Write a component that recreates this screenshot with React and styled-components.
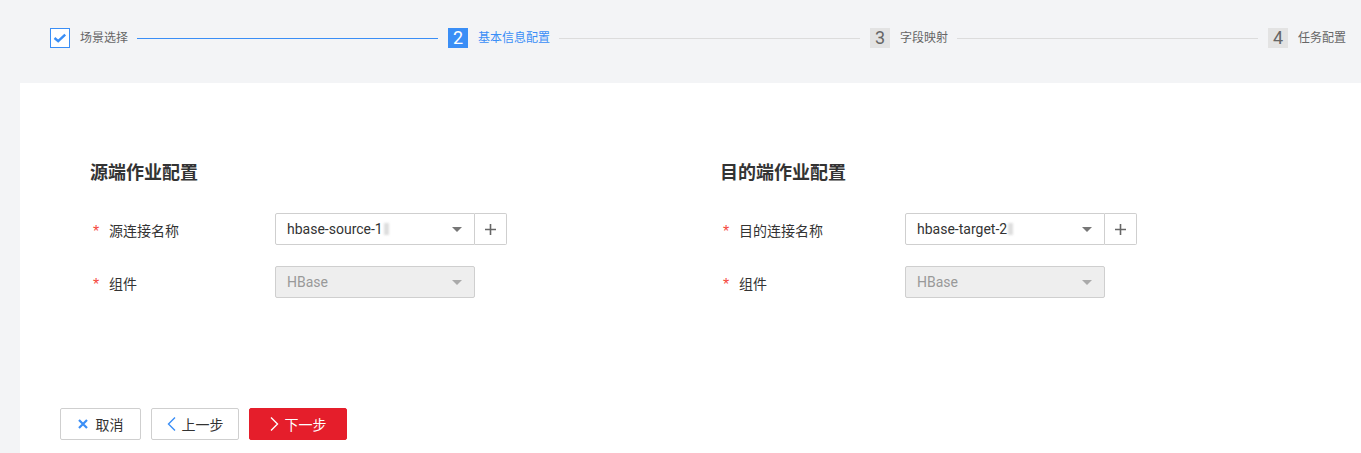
import React from "react";
import styled, { createGlobalStyle } from "styled-components";

const GlobalStyle = createGlobalStyle`
  html, body { margin: 0; padding: 0; }
  body {
    background: #f3f4f6;
    font-family: Roboto, "Noto Sans CJK SC", "Liberation Sans", sans-serif;
    color: #333;
    overflow: hidden;
  }
  * { box-sizing: border-box; }
`;

const Page = styled.div`
  display: flex;
  flex-direction: column;
  min-height: 100vh;
`;

const Header = styled.div`
  height: 83px;
  padding: 28px 15px 0 50px;
`;

const Steps = styled.div`
  display: flex;
  align-items: center;
  height: 20px;
`;

const StepBox = styled.div`
  width: 20px;
  height: 20px;
  flex: none;
  display: flex;
  align-items: center;
  justify-content: center;
  font-family: Roboto, "Liberation Sans", sans-serif;
  font-size: 18px;
  line-height: 20px;
  background: ${(p) => (p.$state === "active" ? "#3a8ef6" : p.$state === "done" ? "#fff" : "#e3e3e3")};
  color: ${(p) => (p.$state === "active" ? "#fff" : "#666")};
  border: ${(p) => (p.$state === "done" ? "1px solid #3a8ef6" : "none")};
`;

const StepLabel = styled.span`
  margin-left: 10px;
  font-size: 12px;
  line-height: 20px;
  white-space: nowrap;
  color: ${(p) => (p.$state === "active" ? "#3a8ef6" : "#666")};
`;

const StepLine = styled.div`
  flex: 1;
  height: 1px;
  margin: 0 10px 0 9px;
  background: ${(p) => (p.$done ? "#3a8ef6" : "#dcdcdc")};
`;

const Panel = styled.div`
  flex: 1;
  margin-left: 20px;
  background: #fff;
  padding: 78px 0 40px 40px;
`;

const Columns = styled.div`
  display: grid;
  grid-template-columns: 630px 1fr;
  margin-left: 30px;
`;

const Section = styled.div`
  display: flex;
  flex-direction: column;
`;

const SectionTitle = styled.h2`
  margin: 0 0 28px;
  font-size: 18px;
  line-height: 24px;
  font-weight: 700;
  color: #333;
`;

const Rows = styled.div`
  display: flex;
  flex-direction: column;
  gap: 21px;
`;

const Row = styled.div`
  display: flex;
  align-items: center;
  height: 32px;
`;

const Label = styled.div`
  width: 185px;
  flex: none;
  display: flex;
  align-items: center;
  font-size: 14px;
  color: #333;
  padding-left: 3px;
  padding-top: 2px;
`;

const Star = styled.span`
  color: #f5473b;
  font-size: 16px;
  font-family: "Liberation Sans", sans-serif;
  width: 16px;
  line-height: 14px;
  padding-top: 4px;
`;

const Control = styled.div`
  display: flex;
`;

const Select = styled.div`
  width: 200px;
  height: 32px;
  display: flex;
  align-items: center;
  justify-content: space-between;
  padding: 0 12px 0 11px;
  border: 1px solid #cfcfcf;
  border-radius: ${(p) => (p.$grouped ? "2px 0 0 2px" : "2px")};
  background: ${(p) => (p.$disabled ? "#eeeeee" : "#fff")};
  color: ${(p) => (p.$disabled ? "#999" : "#333")};
  font-size: 14px;
`;

const Value = styled.span`
  display: flex;
  align-items: center;
  white-space: nowrap;
`;

const Redacted = styled.span`
  display: inline-block;
  width: 5px;
  height: 12px;
  margin-left: 1px;
  background: #dedede;
  filter: blur(1px);
`;

const Caret = styled.span`
  width: 0;
  height: 0;
  border-left: 5px solid transparent;
  border-right: 5px solid transparent;
  border-top: 5px solid ${(p) => (p.$disabled ? "#aaa" : "#777")};
`;

const AddButton = styled.div`
  width: 32px;
  height: 32px;
  display: flex;
  align-items: center;
  justify-content: center;
  border: 1px solid #cfcfcf;
  border-left: none;
  border-radius: 0 2px 2px 0;
  background: #fff;
`;

const Actions = styled.div`
  display: flex;
  gap: 10px;
  margin-top: 110px;
`;

const Button = styled.button`
  width: ${(p) => p.$w}px;
  height: 32px;
  display: flex;
  align-items: center;
  justify-content: center;
  gap: ${(p) => p.$gap || 6}px;
  border-radius: 2px;
  font-family: inherit;
  font-size: 14px;
  padding: 0;
  cursor: pointer;
  border: 1px solid ${(p) => (p.$primary ? "#e51e2b" : "#cfcfcf")};
  background: ${(p) => (p.$primary ? "#e51e2b" : "#fff")};
  color: ${(p) => (p.$primary ? "#fff" : "#333")};
`;

const Check = () => (
  <svg width="16" height="16" viewBox="0 0 16 16">
    <path d="M2.5 8 L6.2 11.2 L13.2 4.6" fill="none" stroke="#3a8ef6" strokeWidth="2.4" />
  </svg>
);

const Plus = () => (
  <svg width="11" height="11" viewBox="0 0 11 11">
    <path d="M5.5 0 V11 M0 5.5 H11" stroke="#666" strokeWidth="1.6" />
  </svg>
);

const Cross = () => (
  <svg width="10" height="10" viewBox="0 0 10 10">
    <path d="M1 1 L9 9 M9 1 L1 9" stroke="#3a8ef6" strokeWidth="2.2" />
  </svg>
);

const Chevron = ({ dir, color }) => (
  <svg width="9" height="14" viewBox="0 0 9 14">
    <path
      d={dir === "left" ? "M8 0.5 L1.5 7 L8 13.5" : "M1 0.5 L7.5 7 L1 13.5"}
      fill="none"
      stroke={color}
      strokeWidth="1.4"
    />
  </svg>
);

const steps = [
  { n: 1, label: "场景选择", state: "done" },
  { n: 2, label: "基本信息配置", state: "active" },
  { n: 3, label: "字段映射", state: "todo" },
  { n: 4, label: "任务配置", state: "todo" },
];

const sections = [
  { title: "源端作业配置", conn: "源连接名称", value: "hbase-source-1" },
  { title: "目的端作业配置", conn: "目的连接名称", value: "hbase-target-2" },
];

export default function App() {
  return (
    <Page>
      <GlobalStyle />
      <Header>
        <Steps>
          {steps.map((s, i) => (
            <React.Fragment key={s.n}>
              <StepBox $state={s.state}>{s.state === "done" ? <Check /> : s.n}</StepBox>
              <StepLabel $state={s.state}>{s.label}</StepLabel>
              {i < steps.length - 1 && <StepLine $done={s.state === "done"} />}
            </React.Fragment>
          ))}
        </Steps>
      </Header>
      <Panel>
        <Columns>
          {sections.map((sec) => (
            <Section key={sec.title}>
              <SectionTitle>{sec.title}</SectionTitle>
              <Rows>
                <Row>
                  <Label>
                    <Star>*</Star>
                    {sec.conn}
                  </Label>
                  <Control>
                    <Select $grouped>
                      <Value>
                        {sec.value}
                        <Redacted />
                      </Value>
                      <Caret />
                    </Select>
                    <AddButton>
                      <Plus />
                    </AddButton>
                  </Control>
                </Row>
                <Row>
                  <Label>
                    <Star>*</Star>
                    组件
                  </Label>
                  <Select $disabled>
                    <Value>HBase</Value>
                    <Caret $disabled />
                  </Select>
                </Row>
              </Rows>
            </Section>
          ))}
        </Columns>
        <Actions>
          <Button $w={81} $gap={8}>
            <Cross />
            取消
          </Button>
          <Button $w={88}>
            <Chevron dir="left" color="#3a8ef6" />
            上一步
          </Button>
          <Button $w={98} $primary>
            <Chevron dir="right" color="#fff" />
            下一步
          </Button>
        </Actions>
      </Panel>
    </Page>
  );
}
